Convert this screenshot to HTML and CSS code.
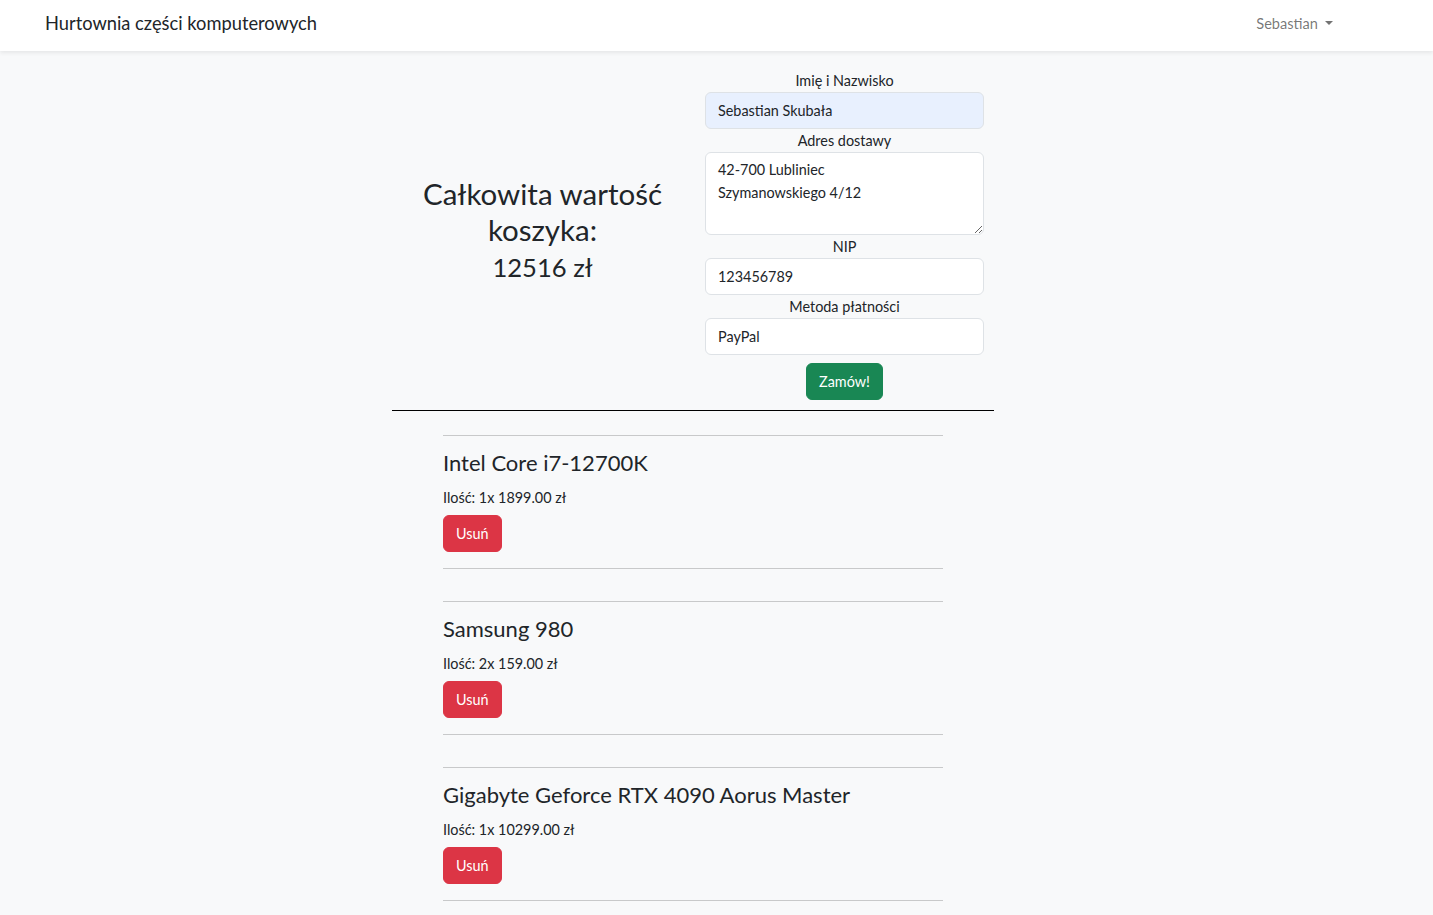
FILE: index.html
```html
<!DOCTYPE html>
<html lang="pl">
<head>
<meta charset="utf-8">
<title>Hurtownia części komputerowych</title>
<link rel="stylesheet" href="styles.css">
</head>
<body>
<nav class="navbar">
  <a class="brand" href="#">Hurtownia części komputerowych</a>
  <a class="user-toggle" href="#">Sebastian<span class="caret"></span></a>
</nav>
<main class="cart">
  <section class="summary-row">
    <div class="total-col">
      <h2 class="total-title">Całkowita wartość koszyka:</h2>
      <h3 class="total-value">12516 zł</h3>
    </div>
    <div class="form-col">
      <form class="order-form">
        <label class="field-label">Imię i Nazwisko</label>
        <input class="field autofilled" type="text" value="Sebastian Skubała">
        <label class="field-label">Adres dostawy</label>
        <textarea class="field area" rows="3">42-700 Lubliniec
Szymanowskiego 4/12</textarea>
        <label class="field-label">NIP</label>
        <input class="field" type="text" value="123456789">
        <label class="field-label">Metoda płatności</label>
        <input class="field" type="text" value="PayPal">
        <div class="submit-wrap"><button class="btn btn-success" type="button">Zamów!</button></div>
      </form>
    </div>
  </section>
  <hr class="divider">
  <ul class="items">
    <li class="item">
      <h4 class="item-name">Intel Core i7-12700K</h4>
      <p class="item-qty">Ilość: 1x 1899.00 zł</p>
      <button class="btn btn-danger" type="button">Usuń</button>
    </li>
    <li class="item">
      <h4 class="item-name">Samsung 980</h4>
      <p class="item-qty">Ilość: 2x 159.00 zł</p>
      <button class="btn btn-danger" type="button">Usuń</button>
    </li>
    <li class="item">
      <h4 class="item-name">Gigabyte Geforce RTX 4090 Aorus Master</h4>
      <p class="item-qty">Ilość: 1x 10299.00 zł</p>
      <button class="btn btn-danger" type="button">Usuń</button>
    </li>
  </ul>
</main>
</body>
</html>
```
FILE: styles.css
```css
* { box-sizing: border-box; }
html, body { margin: 0; padding: 0; }
body {
  background: #f8f9fa;
  color: #212529;
  font-family: Lato, "Noto Sans", sans-serif;
  font-size: 14.4px;
  line-height: 1.6;
}
.navbar {
  height: 51px;
  background: #fff;
  box-shadow: 0 2px 4px rgba(0,0,0,0.075);
  display: flex;
  align-items: center;
  justify-content: space-between;
  padding: 0 100px 4px 45px;
  position: relative;
}
.brand {
  color: #212529;
  text-decoration: none;
  font-size: 18.3px;
}
.user-toggle {
  color: rgba(0,0,0,0.55);
  text-decoration: none;
  font-size: 14.6px;
  display: flex;
  align-items: center;
}
.caret {
  display: inline-block;
  margin-left: 7px;
  border-top: 4.3px solid;
  border-left: 4.3px solid transparent;
  border-right: 4.3px solid transparent;
  margin-top: -2px;
}
.cart {
  width: 602px;
  margin-left: 392px;
  padding-top: 18px;
}
.summary-row {
  display: flex;
  align-items: center;
}
.total-col, .form-col {
  width: 50%;
}
.total-col {
  text-align: center;
  padding: 0 12px 12px;
}
.form-col {
  padding: 0 10px 0 12px;
}
.total-title {
  font-size: 29.5px;
  font-weight: 400;
  line-height: 36px;
  margin: 0 0 4px;
}
.total-value {
  font-size: 25.6px;
  font-weight: 400;
  line-height: 30px;
  margin: 0;
}
.order-form {
  display: flex;
  flex-direction: column;
}
.field-label {
  text-align: center;
  line-height: 23px;
  font-size: 14.4px;
}
.field {
  font: inherit;
  color: #212529;
  background: #fff;
  border: 1px solid #dee2e6;
  border-radius: 6px;
  padding: 6px 12px;
  height: 37px;
  line-height: 23px;
  width: 100%;
}
.field.autofilled { background: #e8f0fe; }
.field.area {
  height: 83px;
  resize: vertical;
  line-height: 23px;
  padding-top: 5px;
}
.submit-wrap {
  text-align: center;
  margin-top: 8px;
}
.btn {
  font: inherit;
  color: #fff;
  border-radius: 6px;
  padding: 6px 12px;
  height: 37px;
  line-height: 23px;
  cursor: pointer;
}
.btn-success { background: #198754; border: 1px solid #198754; }
.btn-danger { background: #dc3545; border: 1px solid #dc3545; }
.divider {
  border: 0;
  border-top: 1px solid #000;
  margin: 10px 0 0;
}
.items {
  list-style: none;
  margin: 24px 51px 0;
  padding: 0;
}
.item {
  border-top: 1px solid #c8c9ca;
  border-bottom: 1px solid #c8c9ca;
  padding: 14px 0 16px;
  margin-bottom: 32px;
}
.item-name {
  font-size: 22px;
  font-weight: 400;
  line-height: 26px;
  margin: 0 0 10px;
}
.item-qty {
  margin: 0 0 6px;
  line-height: 23px;
}
```
